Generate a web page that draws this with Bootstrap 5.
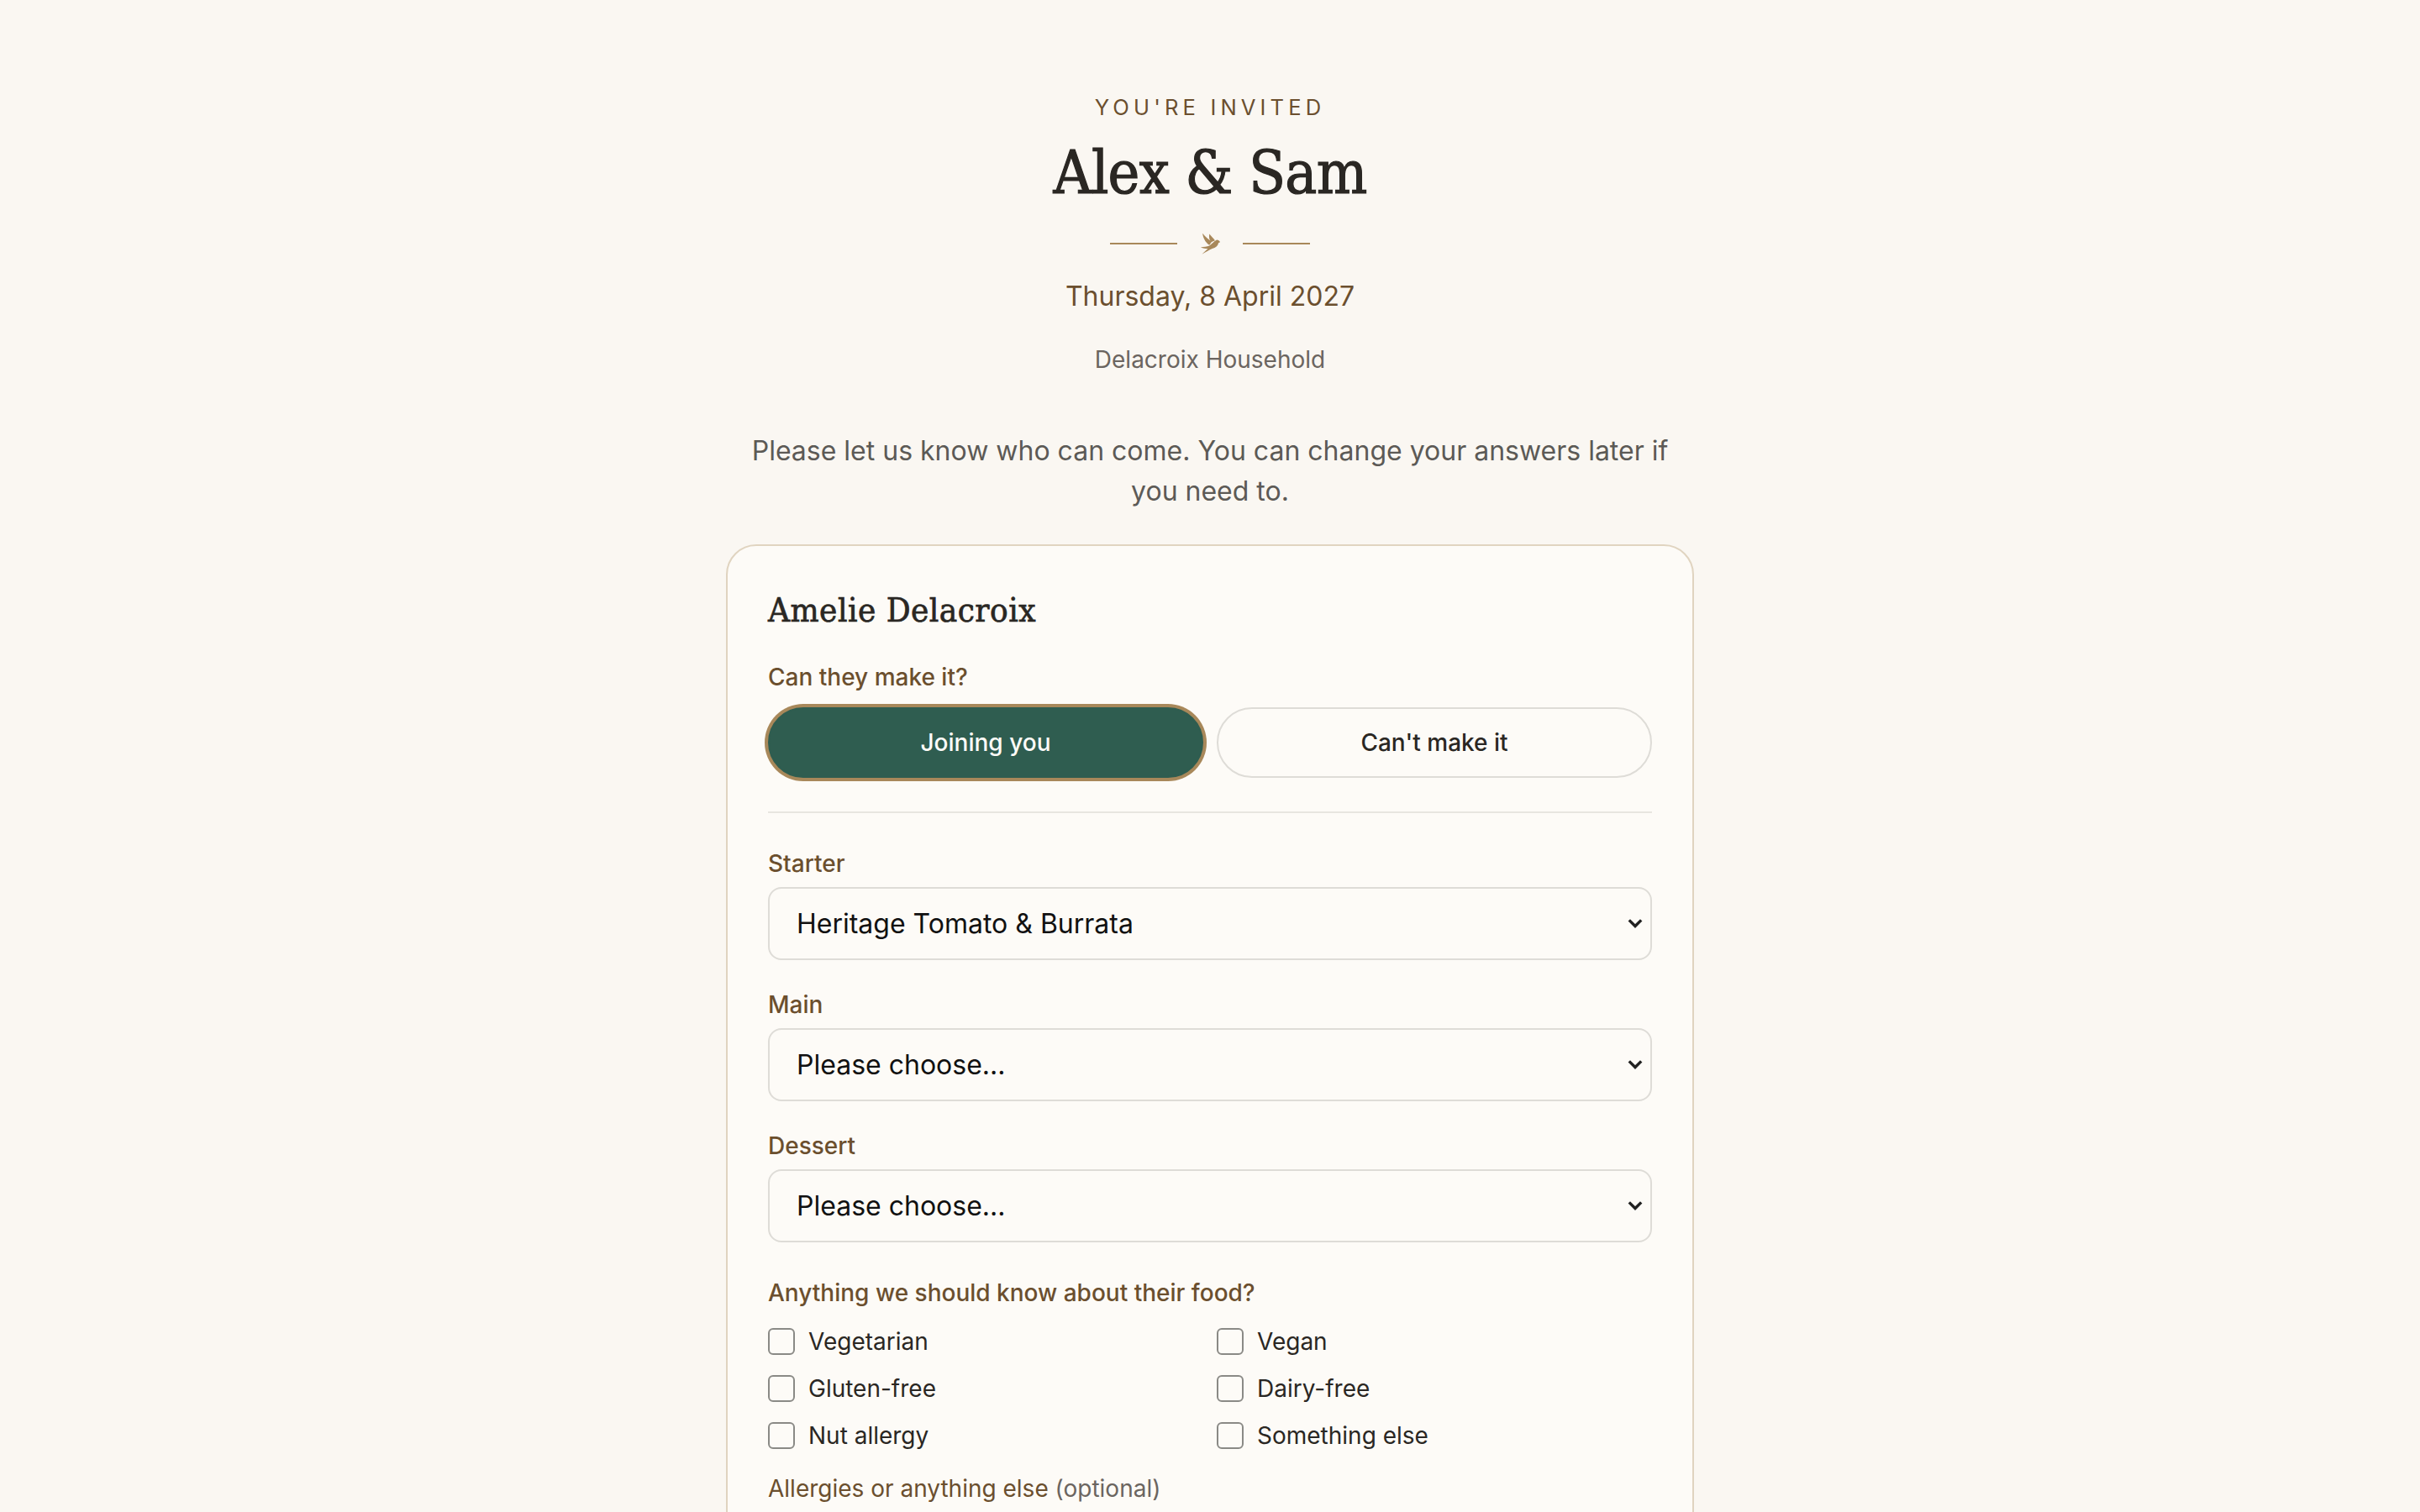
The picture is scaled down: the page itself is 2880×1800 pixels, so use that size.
<!DOCTYPE html>
<html lang="en">
<head>
<meta charset="utf-8">
<title>RSVP</title>
<link href="https://cdn.jsdelivr.net/npm/bootstrap@5.3.0/dist/css/bootstrap.min.css" rel="stylesheet">
<style>
html{zoom:2}
body{background:#faf7f2;font-family:"Inter",sans-serif;color:#2a2723}
.invite-wrap{max-width:640px;padding:54px 32px 48px}
.eyebrow{font-size:12.8px;letter-spacing:.2em;color:#6b4f2e;line-height:20px;text-transform:uppercase;margin-bottom:5px}
.couple{font-family:"DejaVu Serif Condensed","Liberation Serif",serif;font-size:35.5px;font-weight:400;letter-spacing:-.01em;-webkit-text-stroke:.6px #2a2723;line-height:48px;color:#2a2723;margin-bottom:0}
.orn{margin-top:10px;height:16px;gap:13.5px}
.orn-line{width:40px;height:1px;background:#a8885a}
.orn svg{width:12px;height:13px;fill:#a8885a}
.date-line{font-size:16px;color:#6b4f2e;line-height:24px;margin-top:11.7px}
.house{font-size:14px;color:#6b6560;line-height:24px;margin-top:13.3px}
.intro{font-size:16px;line-height:24px;color:#5c5a56;margin:30.5px 0 19.5px}
.guest{background:#fdfbf7;border:1px solid #e0d4c0;border-radius:18px;padding:25px 24px 24px}
.guest-name{font-family:"DejaVu Serif Condensed","Liberation Serif",serif;font-size:20px;font-weight:400;letter-spacing:.25px;-webkit-text-stroke:.35px #2a2723;line-height:26px;color:#2a2723;margin-bottom:17px}
.fld-label{font-size:14px;font-weight:500;color:#6b4f2e;line-height:20px;margin-bottom:4.2px;display:block}
.fld-pick{margin-bottom:8px}
.fld-food{margin-top:19.9px;margin-bottom:5px}
.fld-note{font-weight:400}
.opt-muted{color:#6b6560}
.pick-btn{flex:1 1 0;height:42px;border-radius:999px;font-size:14px;font-weight:500;line-height:1;border:1px solid #dedcd7;background:#fdfbf7;color:#2a2723;padding:0}
.pick-btn.is-on,.pick-btn.is-on:hover{background:#2f5d50;color:#fdfbf7;border-color:#2f5d50;box-shadow:0 0 0 2px #a8885a}
.sep{border:0;border-top:1px solid #e8e6e0;opacity:1;margin:20px 0}
.menu-sel{background-color:#fdfbf7;background-image:url("data:image/svg+xml,%3csvg xmlns='http://www.w3.org/2000/svg' viewBox='0 0 10 7'%3e%3cpath fill='none' stroke='%23222' stroke-width='1.9' d='M1 1.2l4 4 4-4'/%3e%3c/svg%3e");background-position:right 4.5px center;background-size:9px 6.5px;border:1px solid #dedcd7;border-radius:8px;height:43.4px;font-size:16px;color:#111;padding:0 20px 0 16px;margin-bottom:16.4px}
.chk-grid{display:grid;grid-template-columns:1fr 1fr;column-gap:8px;row-gap:4px;margin-top:7px;margin-bottom:9.5px}
.chk-item{display:flex;align-items:center;gap:8px;font-size:14px;line-height:24px;color:#2a2723;margin:0;padding:0;min-height:24px}
.chk-item .form-check-input{float:none;margin:0;width:16px;height:16px;flex:none;background-color:#fdfbf7;border:1px solid #8a8a86;border-radius:3px}
.note-box{background:#fdfbf7;border:1px solid #dedcd7;border-radius:8px}
</style>
</head>
<body>
<main class="invite-wrap mx-auto">
  <header class="text-center">
    <p class="eyebrow">You're invited</p>
    <h1 class="couple">Alex &amp; Sam</h1>
    <div class="orn d-flex align-items-center justify-content-center">
      <span class="orn-line"></span>
      <svg viewBox="88 22 64 70" aria-hidden="true"><path d="M96 24C98 38 104 52 118 62L126 50C118 46 106 36 96 24Z"/><path d="M118 26C116 38 118 46 124 52L136 47C131 40 124 33 118 26Z"/><path d="M90 69C100 68 110 68 118 64C126 58 132 50 142 45C147 45 150 49 153 52L147 55C146 63 138 71 127 73C118 77 106 84 94 91C102 84 108 78 113 74C106 73 98 72 90 69Z"/></svg>
      <span class="orn-line"></span>
    </div>
    <p class="date-line mb-0">Thursday, 8 April 2027</p>
    <p class="house mb-0">Delacroix Household</p>
    <p class="intro">Please let us know who can come. You can change your answers later if you need to.</p>
  </header>
  <section class="guest">
    <h2 class="guest-name">Amelie Delacroix</h2>
    <span class="fld-label fld-pick">Can they make it?</span>
    <div class="d-flex gap-2 align-items-center">
      <button type="button" class="btn pick-btn is-on">Joining you</button>
      <button type="button" class="btn pick-btn">Can't make it</button>
    </div>
    <hr class="sep">
    <label class="fld-label" for="s1">Starter</label>
    <select id="s1" class="form-select menu-sel"><option>Heritage Tomato &amp; Burrata</option></select>
    <label class="fld-label" for="s2">Main</label>
    <select id="s2" class="form-select menu-sel"><option>Please choose...</option></select>
    <label class="fld-label" for="s3">Dessert</label>
    <select id="s3" class="form-select menu-sel"><option>Please choose...</option></select>
    <span class="fld-label fld-food">Anything we should know about their food?</span>
    <div class="chk-grid">
      <label class="chk-item"><input class="form-check-input" type="checkbox">Vegetarian</label>
      <label class="chk-item"><input class="form-check-input" type="checkbox">Vegan</label>
      <label class="chk-item"><input class="form-check-input" type="checkbox">Gluten-free</label>
      <label class="chk-item"><input class="form-check-input" type="checkbox">Dairy-free</label>
      <label class="chk-item"><input class="form-check-input" type="checkbox">Nut allergy</label>
      <label class="chk-item"><input class="form-check-input" type="checkbox">Something else</label>
    </div>
    <label class="fld-label fld-note" for="n1">Allergies or anything else <span class="opt-muted">(optional)</span></label>
    <textarea id="n1" class="form-control note-box" rows="3"></textarea>
  </section>
</main>
<script src="https://cdn.jsdelivr.net/npm/bootstrap@5.3.0/dist/js/bootstrap.bundle.min.js"></script>
</body>
</html>
